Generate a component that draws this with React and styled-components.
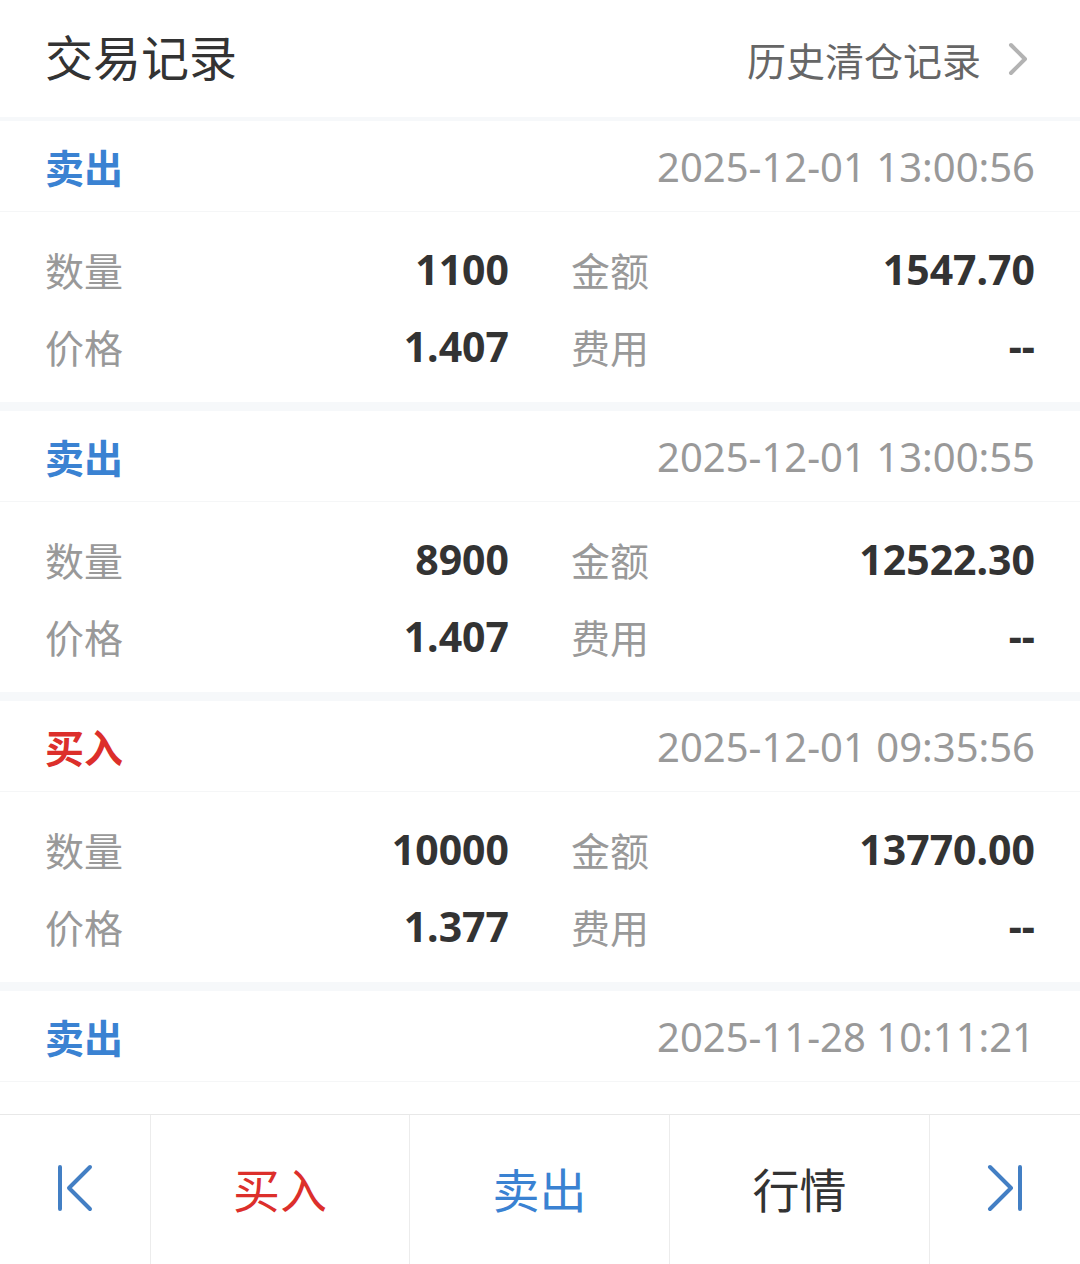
import React from "react";
import styled, { createGlobalStyle } from "styled-components";

const records = [
  { side: "sell", time: "2025-12-01 13:00:56", count: "1100", amount: "1547.70", price: "1.407", fee: "--" },
  { side: "sell", time: "2025-12-01 13:00:55", count: "8900", amount: "12522.30", price: "1.407", fee: "--" },
  { side: "buy", time: "2025-12-01 09:35:56", count: "10000", amount: "13770.00", price: "1.377", fee: "--" },
  { side: "sell", time: "2025-11-28 10:11:21" },
];

const sideNames = { buy: "买入", sell: "卖出" };

function Record({ record }) {
  return (
    <RecordWrapper>
      <RecordHeader>
        <Side $side={record.side}>{sideNames[record.side]}</Side>
        <Time>{record.time}</Time>
      </RecordHeader>
      {record.count && (
        <Details>
          <Field>
            <Label>数量</Label>
            <Value>{record.count}</Value>
          </Field>
          <Field>
            <Label>金额</Label>
            <Value>{record.amount}</Value>
          </Field>
          <Field>
            <Label>价格</Label>
            <Value>{record.price}</Value>
          </Field>
          <Field>
            <Label>费用</Label>
            <Value>{record.fee}</Value>
          </Field>
        </Details>
      )}
    </RecordWrapper>
  );
}

function App() {
  return (
    <Page>
      <GlobalStyle />
      <TopBar>
        <Title>交易记录</Title>
        <HistoryLink href="#history">
          历史清仓记录
          <svg width="20" height="38" viewBox="0 0 20 38" fill="none">
            <path
              d="M3 3L17 17L3 31"
              stroke="#b3b3b3"
              strokeWidth="4"
              strokeLinecap="round"
              strokeLinejoin="round"
            />
          </svg>
        </HistoryLink>
      </TopBar>
      <main>
        {records.map((record) => (
          <Record key={record.time} record={record} />
        ))}
      </main>
      <BottomBar>
        <BarButton aria-label="上一个">
          <BarIcon viewBox="0 0 36 48">
            <path d="M3 3V45M33 3L12 24L33 45" />
          </BarIcon>
        </BarButton>
        <BarButton $color="#dc2f2b">买入</BarButton>
        <BarButton $color="#3a82d2">卖出</BarButton>
        <BarButton>行情</BarButton>
        <BarButton aria-label="下一个">
          <BarIcon viewBox="0 0 36 48">
            <path d="M33 3V45M3 3L24 24L3 45" />
          </BarIcon>
        </BarButton>
      </BottomBar>
    </Page>
  );
}

const GlobalStyle = createGlobalStyle`
  * {
    box-sizing: border-box;
  }
  body {
    margin: 0;
    background: #fff;
    color: #333;
    font-family: "Noto Sans", "Noto Sans CJK SC", sans-serif;
  }
`;

const Page = styled.div`
  display: flex;
  flex-direction: column;
  min-height: 100vh;
`;

const TopBar = styled.header`
  display: flex;
  align-items: baseline;
  justify-content: space-between;
  height: 121px;
  padding: 22px 52px 0 45px;
  border-bottom: 4px solid #f6f8fa;
`;

const Title = styled.h1`
  margin: 0;
  font-size: 48px;
  font-weight: 400;
  line-height: 72px;
`;

const HistoryLink = styled.a`
  display: flex;
  align-items: center;
  gap: 27px;
  color: #666;
  font-size: 39px;
  line-height: 60px;
  text-decoration: none;
`;

const RecordWrapper = styled.section`
  & + & {
    border-top: 9px solid #f6f8fa;
  }
`;

const RecordHeader = styled.div`
  display: flex;
  align-items: center;
  justify-content: space-between;
  height: 91px;
  padding: 0 45px;
  border-bottom: 1px solid #f5f6f7;
`;

const Side = styled.strong`
  color: ${({ $side }) => ($side === "buy" ? "#dc2f2b" : "#3a82d2")};
  font-size: 39px;
  font-weight: 700;
`;

const Time = styled.time`
  color: #999;
  font-size: 40px;
`;

const Details = styled.div`
  display: grid;
  grid-template-columns: 1fr 1fr;
  column-gap: 62px;
  padding: 18px 45px;
`;

const Field = styled.div`
  display: flex;
  align-items: center;
  justify-content: space-between;
  height: 77px;
`;

const Label = styled.span`
  color: #999;
  font-size: 39px;
`;

const Value = styled.span`
  font-size: 41px;
  font-weight: 700;
`;

const BottomBar = styled.nav`
  position: sticky;
  bottom: 0;
  display: grid;
  grid-template-columns: 150fr 259fr 260fr 260fr 151fr;
  height: 150px;
  margin-top: auto;
  background: #fff;
  border-top: 1px solid #e8e8e8;
`;

const BarButton = styled.button`
  display: flex;
  align-items: center;
  justify-content: center;
  padding: 0 0 4px;
  border: none;
  background: transparent;
  color: ${({ $color }) => $color || "#333"};
  font-family: inherit;
  font-size: 47px;
  cursor: pointer;
  & + & {
    border-left: 1px solid #ececec;
  }
`;

const BarIcon = styled.svg`
  width: 36px;
  height: 48px;
  fill: none;
  stroke: #437fc4;
  stroke-width: 4px;
  stroke-linecap: round;
  stroke-linejoin: round;
`;

export default App;
